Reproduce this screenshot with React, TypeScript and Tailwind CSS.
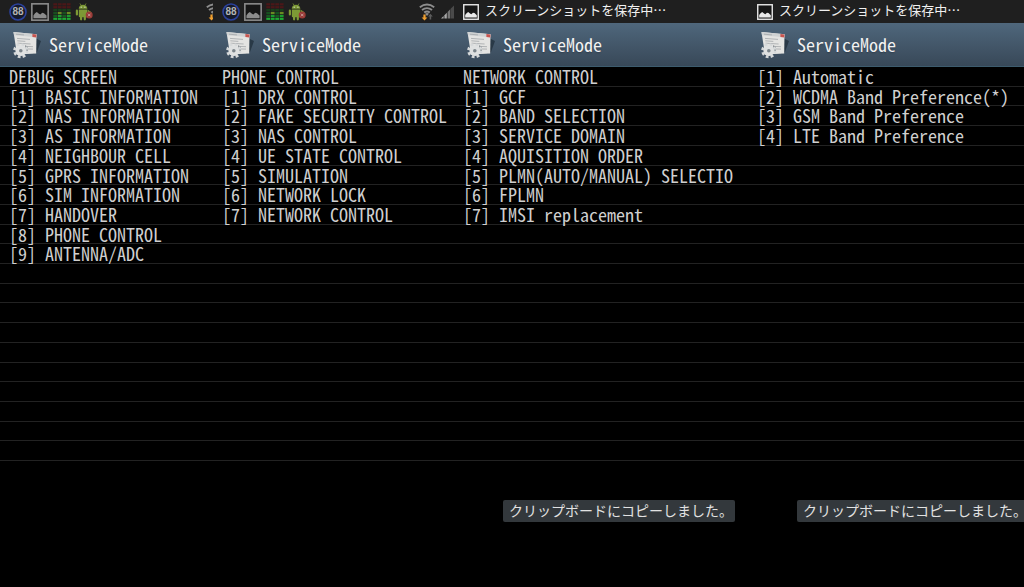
import clsx from 'clsx';

type Screen = {
  heading?: string;
  items: string[];
  saving?: boolean;
};

const ROWS = 20;

const screens: Screen[] = [
  {
    heading: 'DEBUG SCREEN',
    items: [
      'BASIC INFORMATION',
      'NAS INFORMATION',
      'AS INFORMATION',
      'NEIGHBOUR CELL',
      'GPRS INFORMATION',
      'SIM INFORMATION',
      'HANDOVER',
      'PHONE CONTROL',
      'ANTENNA/ADC',
    ],
  },
  {
    heading: 'PHONE CONTROL',
    items: [
      'DRX CONTROL',
      'FAKE SECURITY CONTROL',
      'NAS CONTROL',
      'UE STATE CONTROL',
      'SIMULATION',
      'NETWORK LOCK',
      'NETWORK CONTROL',
    ],
  },
  {
    heading: 'NETWORK CONTROL',
    items: [
      'GCF',
      'BAND SELECTION',
      'SERVICE DOMAIN',
      'AQUISITION ORDER',
      'PLMN(AUTO/MANUAL) SELECTIO',
      'FPLMN',
      'IMSI replacement',
    ],
    saving: true,
  },
  {
    items: ['Automatic', 'WCDMA Band Preference(*)', 'GSM Band Preference', 'LTE Band Preference'],
    saving: true,
  },
];

function PictureIcon({ className }: { className?: string }) {
  return (
    <svg viewBox="0 0 17 17" className={clsx('shrink-0', className)} aria-hidden="true">
      <rect x="0.8" y="0.8" width="15.4" height="15.4" fill="#161616" stroke="currentColor" strokeWidth="1.5" />
      <path d="M2.3 14.3v-2.6l1.5-2 1.7-1.2 2 1.7 1.3.7 1.8-1.6 1.6.3 2.5 2.3v2.4z" fill="currentColor" />
    </svg>
  );
}

function BatteryIcon() {
  return (
    <svg viewBox="0 0 18 18" className="size-[18px] shrink-0" aria-hidden="true">
      <circle cx="9" cy="9" r="8" fill="#161a2a" stroke="#2b419c" strokeWidth="1.6" />
      <text x="9" y="12.4" textAnchor="middle" fontSize="10" fontWeight="bold" fontFamily="Liberation Sans, sans-serif" fill="#b4b4b4">
        88
      </text>
    </svg>
  );
}

const barColors = [
  ['#4a1718', '#4a1718', '#4a1718', '#4a1718'],
  ['#4a1718', '#4a1718', '#4a1718', '#4a1718'],
  ['#173f1b', '#173f1b', '#173f1b', '#173f1b'],
  ['#17501f', '#6a8a22', '#17501f', '#6a8a22'],
  ['#175a20', '#1b9c2f', '#175a20', '#1b9c2f'],
  ['#1dab33', '#1dab33', '#1dab33', '#1dab33'],
];

function MeterIcon() {
  return (
    <svg viewBox="0 0 18 17" className="h-[17px] w-[18px] shrink-0" aria-hidden="true">
      {barColors.map((row, y) =>
        row.map((fill, x) => (
          <rect key={`${x}-${y}`} x={x * 4.5 + 0.3} y={y * 2.9 + 0.2} width="3.8" height="2.2" fill={fill} />
        )),
      )}
    </svg>
  );
}

function AndroidIcon() {
  return (
    <svg viewBox="0 0 19 18" className="h-[18px] w-[19px] shrink-0" aria-hidden="true">
      <g fill="#7d9a35">
        <path d="M3.7 5.8C3.9 3.2 5.6 1.7 8 1.7s4.2 1.5 4.4 4.1z" />
        <path d="M5 .5l1.3 2M11 .5l-1.3 2" stroke="#7d9a35" strokeWidth=".8" />
        <path d="M3.8 6.6h8.6v6.6q0 1-1 1H4.8q-1 0-1-1z" />
        <rect x="5" y="12" width="2.2" height="5.4" rx="1.1" />
        <rect x="8.7" y="12" width="2.2" height="5.4" rx="1.1" />
        <rect x=".8" y="6.6" width="2.2" height="6" rx="1.1" />
        <path d="M12.8 6.8l3.8 2.5-.9 1.7-2.9-1.7z" />
      </g>
      <circle cx="6.2" cy="4.2" r=".6" fill="#ddd" />
      <circle cx="9.9" cy="4.2" r=".6" fill="#ddd" />
      <circle cx="14.2" cy="12" r="3.5" fill="#993a36" />
      <path d="M12.9 10.7l2.6 2.6m0-2.6l-2.6 2.6" stroke="#c9a3a0" strokeWidth=".9" />
    </svg>
  );
}

function WifiIcon() {
  return (
    <svg viewBox="0 0 16 18" className="h-[18px] w-4 shrink-0" aria-hidden="true">
      <g fill="none" stroke="#8d8d8d" strokeWidth="1.9">
        <path d="M.8 4.2q7.2-5.4 14.4 0" />
        <path d="M3 7q5-3.8 10 0" />
        <path d="M5.2 9.6q2.8-2.1 5.6 0" />
      </g>
      <path d="M8 13L6 10.8q2-1.4 4 0z" fill="#8d8d8d" />
      <path d="M4.4 11.5h2.2v3h1.8l-2.9 3-2.9-3h1.8z" fill="#f0a030" />
      <path d="M10.6 16.5v-3H9l2.4-2.7 2.4 2.7h-1.6v3z" fill="#5c5c5c" />
    </svg>
  );
}

function SignalIcon() {
  return (
    <svg viewBox="0 0 13 14" className="h-[14px] w-[13px] shrink-0" aria-hidden="true">
      <path d="M0 13.5L2.6 11v2.5z" fill="#aaa" />
      <path d="M3.4 13.5v-3.3L5.8 7.7v5.8z" fill="#aaa" />
      <path d="M6.6 13.5V6.9L9.2 4.2v9.3z" fill="#777" />
      <path d="M9.6 13.5V3.8L13 .4v13.1z" fill="#4a4a4a" />
    </svg>
  );
}

function ServiceIcon() {
  return (
    <svg viewBox="0 0 30 28" className="h-7 w-[30px] shrink-0" aria-hidden="true">
      <path d="M23 7l6 3-4 11-4 2z" fill="#1e2c38" opacity=".7" />
      <path d="M1.5 1L24.5 3.2 24.2 22.4 5 23.6z" fill="#e4e4e2" />
      <path d="M1.5 1L24.5 3.2v3L2 4.2z" fill="#cfd2d3" />
      <path d="M20.4 3l4 .4v3.1l-4-.4z" fill="#c8544f" />
      <g stroke="#a3a7a9" strokeWidth=".8">
        <path d="M4 3.2l8 .7M5 7.4l13 1M5.3 9.8l8 .6M5.6 12.2l13 .8M14 15.4l7 .3M16 18l5 .1" />
      </g>
      <path d="M13 14l3 2 0 5-3-2z" fill="#59636b" opacity=".6" />
      <circle cx="8.8" cy="19.7" r="6.3" fill="none" stroke="#d6d9da" strokeWidth="2.6" strokeDasharray="2.8 2.15" />
      <circle cx="8.8" cy="19.7" r="5.4" fill="#dfe1e1" />
      <circle cx="8.8" cy="19.7" r="1.8" fill="#7b848a" />
    </svg>
  );
}

function StatusBar({ saving }: { saving?: boolean }) {
  if (saving) {
    return (
      <div className="flex h-[23px] items-center gap-[6px] bg-[#1f1f1f] pl-[9px] text-[13px] leading-4 whitespace-nowrap text-[#f0f0f0]">
        <PictureIcon className="size-4 text-[#e8e8e8]" />
        <span className="pb-1">スクリーンショットを保存中…</span>
      </div>
    );
  }

  return (
    <div className="h-[23px] overflow-hidden bg-[#1f1f1f]">
      <div className="flex h-full w-[241px] items-center pl-[9px]">
        <div className="flex items-center gap-1">
          <BatteryIcon />
          <PictureIcon className="size-[18px] text-[#8c8c8c]" />
          <MeterIcon />
          <AndroidIcon />
        </div>
        <div className="ml-auto flex items-center gap-[6px]">
          <WifiIcon />
          <SignalIcon />
        </div>
      </div>
    </div>
  );
}

function PhoneScreen({ heading, items, saving }: Screen) {
  const used = items.length + (heading ? 1 : 0);

  return (
    <section className="min-w-0 overflow-hidden">
      <StatusBar saving={saving} />
      <header className="flex h-11 items-center gap-[7px] border-b border-[#3d5c6e] bg-linear-to-b from-[#4f677c] to-[#384858] pl-3 text-lg leading-5 text-[#f2f2f2]">
        <ServiceIcon />
        <h1 className="pb-0.5 text-shadow-sm">ServiceMode</h1>
      </header>

      <ul className="grid h-[394px] grid-rows-20 text-lg leading-[18px] whitespace-pre text-[#cfcfcf]">
        {heading && <li className="border-b border-[#222] pl-[9px]">{heading}</li>}
        {items.map((item, i) => (
          <li key={item} className="flex items-start border-b border-[#222]">
            <button type="button" className="w-full pl-[9px] text-left">
              {`[${i + 1}] ${item}`}
            </button>
          </li>
        ))}
        {Array.from({ length: ROWS - used }, (_, i) => (
          <li key={i} className="border-b border-[#222]" />
        ))}
      </ul>

      {saving && (
        <p
          role="status"
          className="mt-[39px] ml-[49px] w-max rounded-xs bg-[#33383c] pr-0.5 pb-0.5 pl-[6px] text-sm leading-5 text-[#e2e2e2]"
        >
          クリップボードにコピーしました。
        </p>
      )}
    </section>
  );
}

export default function App() {
  return (
    <main className="grid min-h-screen grid-cols-[213fr_241fr_294fr_276fr] bg-black font-['Noto_Sans_CJK_JP',sans-serif] [font-feature-settings:'hwid']">
      {screens.map((screen, i) => (
        <PhoneScreen key={i} {...screen} />
      ))}
    </main>
  );
}
